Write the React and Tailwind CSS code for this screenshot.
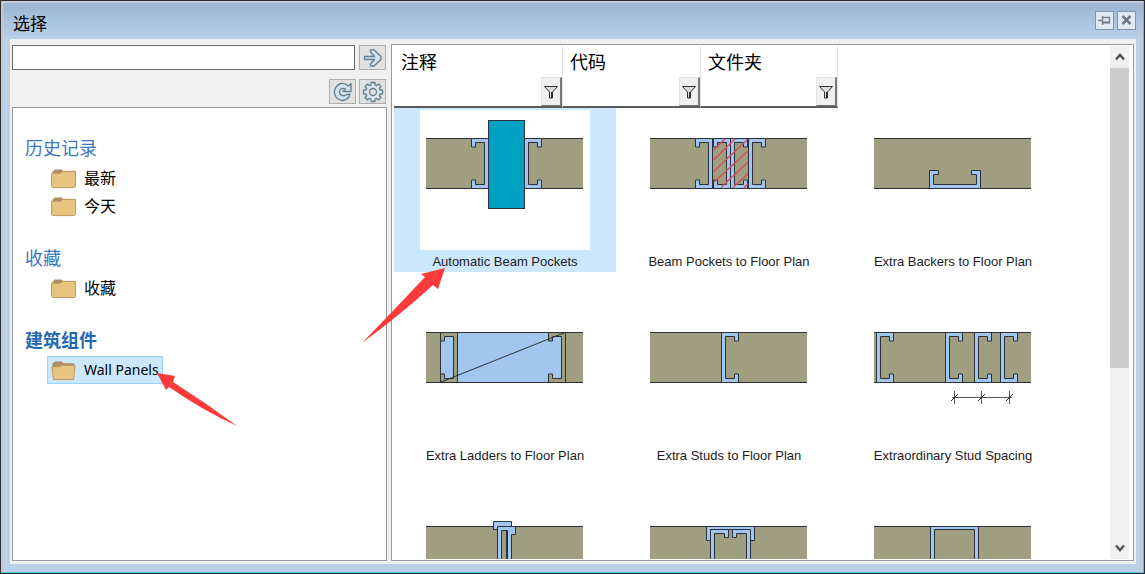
import React from 'react';

const groups = [
  { id: 'history', title: '历史记录', color: 'text-[#3a78bd]', items: ['最新', '今天'] },
  { id: 'favorites', title: '收藏', color: 'text-[#3a78bd]', items: ['收藏'] },
  { id: 'components', title: '建筑组件', color: 'text-[#2468b4] font-bold', items: ['Wall Panels'] }
];

const columns = [
  { name: '注释', width: 'w-[169px]' },
  { name: '代码', width: 'w-[138px]' },
  { name: '文件夹', width: 'w-[137px]' }
];

const STEEL = '#a3c6ee';
const WALL = '#a09e80';
const LINE = '#2c3038';

function Wall() {
  return (
    <>
      <rect x="6" y="28" width="157" height="50" fill={WALL} />
      <path d="M6 28.5H163M6 78.5H163" stroke={LINE} />
    </>
  );
}

// C profile, open to the right unless flipped
function Stud({ x, flip, fill = STEEL }) {
  return (
    <path
      transform={flip ? `translate(${x + 17} 28) scale(-1 1)` : `translate(${x} 28)`}
      d="M0 .5H17V9H13V4.5H4V46.5H13V42H17V50.5H0Z"
      fill={fill}
      stroke={LINE}
    />
  );
}

const drawings = {
  beam: (
    <>
      <Wall />
      <Stud x={51.5} flip />
      <Stud x={104.5} />
      <rect x="68.5" y="10.5" width="36" height="88" fill="#00a0c2" stroke={LINE} />
    </>
  ),
  pockets: (
    <>
      <Wall />
      <Stud x={51.5} flip />
      <Stud x={69.5} flip />
      <Stud x={86.5} />
      <Stud x={104.5} />
      <path d="M69.5 40L81 29M69.5 50L91 29M69.5 61.5L103 30M69.5 72.5L104 41M77 77.5L104 52M89 77.5L104 63.5M100 77.5L104 74" stroke="#d94a5a" strokeWidth="1.3" fill="none" />
    </>
  ),
  backers: (
    <>
      <Wall />
      <path d="M61.5 60.5H70.5V64.5H65.5V74.5H108.5V64.5H103.5V60.5H112.5V78.5H61.5Z" fill={STEEL} stroke={LINE} />
    </>
  ),
  ladders: (
    <>
      <Wall />
      <rect x="20.5" y="28.5" width="125" height="50" fill={STEEL} stroke={LINE} />
      <Stud x={20.5} flip fill={WALL} />
      <Stud x={128.5} flip fill={WALL} />
      <path d="M21 78L145 28.5" stroke={LINE} fill="none" />
    </>
  ),
  studs: (
    <>
      <Wall />
      <Stud x={77.5} />
    </>
  ),
  spacing: (
    <>
      <Wall />
      <Stud x={8.5} />
      <Stud x={77.5} />
      <Stud x={106.5} />
      <Stud x={132.5} />
      <path d="M84 93.5H144M86.5 87V100M113.5 87V100M141.5 87V100" stroke="#555" fill="none" />
      <path d="M83 97L90 90M110 97L117 90M138 97L145 90" stroke={LINE} fill="none" />
    </>
  ),
  corner: (
    <>
      <Wall />
      <path d="M73.5 23.5H91.5V28.5H78.5V31.5H73.5Z" fill={STEEL} stroke={LINE} />
      <path d="M77.5 28.5H95.5V36.5H91.5V78.5H87.5V32.5H81.5V78.5H77.5Z" fill={STEEL} stroke={LINE} />
      <path d="M86.5 32.5V78" stroke={LINE} />
    </>
  ),
  pocket: (
    <>
      <Wall />
      <path d="M62.5 28.5H110.5V42.5H106.5V31.5H66.5V42.5H62.5Z" fill={STEEL} stroke={LINE} />
      <path d="M66.5 31.5H84.5V39.5H80.5V35.5H70.5V78.5H66.5Z" fill={STEEL} stroke={LINE} />
      <path d="M106.5 31.5H88.5V39.5H92.5V35.5H102.5V78.5H106.5Z" fill={STEEL} stroke={LINE} />
    </>
  ),
  track: (
    <>
      <Wall />
      <path d="M62.5 28.5H110.5V78.5H106.5V31.5H66.5V78.5H62.5Z" fill={STEEL} stroke={LINE} />
    </>
  )
};

const parts = [
  { name: 'Automatic Beam Pockets', art: 'beam', selected: true },
  { name: 'Beam Pockets to Floor Plan', art: 'pockets' },
  { name: 'Extra Backers to Floor Plan', art: 'backers' },
  { name: 'Extra Ladders to Floor Plan', art: 'ladders' },
  { name: 'Extra Studs to Floor Plan', art: 'studs' },
  { name: 'Extraordinary Stud Spacing', art: 'spacing' },
  { art: 'corner' },
  { art: 'pocket' },
  { art: 'track' }
];

function FolderIcon({ open }) {
  return (
    <svg width="25" height="21" viewBox="0 0 26 22" fill="none">
      <path d="M2 3.5L4 1.5H11L13 3.5H24V8H1.5V3.5Z" fill="#ae8d62" />
      {open ? (
        <path d="M1 7H9L11 5.5H25V8L23.5 20.5H2.5Z" fill="#e8c480" stroke="#b8935f" />
      ) : (
        <path d="M.5 5.5H10L12 3.5H25.5V19.5L24.5 20.5H1.5L.5 19.5Z" fill="#e8c480" stroke="#b8935f" />
      )}
    </svg>
  );
}

function ToolButton({ label, children }) {
  return (
    <button aria-label={label} className="flex h-[25px] w-[27px] shrink-0 items-center justify-center border border-[#adadad] bg-[#e1e1e1]">
      {children}
    </button>
  );
}

function CaptionButton({ label, children }) {
  return (
    <button aria-label={label} className="flex h-[19px] w-[19px] items-center justify-center border border-[#8494a6] bg-[#dfeaf5]">
      {children}
    </button>
  );
}

function TitleBar() {
  return (
    <header className="flex h-9 shrink-0 items-center justify-between bg-linear-to-b from-[#9ab4d1] to-[#b9d1ea] pr-[7px] pl-2.5">
      <h1 className="pt-1.5 text-[17px] leading-6 text-black">选择</h1>
      <div className="flex gap-[3px] pb-0.5">
        <CaptionButton label="固定">
          <svg width="13" height="11" viewBox="0 0 13 11" fill="none" stroke="#76818d" strokeWidth="1.4">
            <path d="M0 5.5H4M4.5 1V10M4.5 2.5H11.5V7.5H4.5" />
            <path d="M5 7.5H12" strokeWidth="2" />
          </svg>
        </CaptionButton>
        <CaptionButton label="关闭">
          <svg width="11" height="10" viewBox="0 0 11 10" stroke="#6d7884" strokeWidth="2.5">
            <path d="M1.5 1L9.5 9M9.5 1L1.5 9" />
          </svg>
        </CaptionButton>
      </div>
    </header>
  );
}

function Sidebar() {
  return (
    <aside className="flex w-[375px] shrink-0 flex-col">
      <div className="flex gap-1 pt-px pr-px">
        <input type="text" aria-label="搜索" className="h-[25px] min-w-0 flex-1 border border-[#6a6a6a] bg-white px-1 text-sm outline-none" />
        <ToolButton label="转到">
          <svg width="20" height="20" viewBox="0 0 20 20" fill="#d3e2ee" stroke="#63818f" strokeWidth="1.4" strokeLinejoin="round">
            <path d="M1.5 8.500H11.500L7.500 4V2H11L18 8.500V11.500L11 18H7.500V16L11.500 11.500H1.500Z" />
          </svg>
        </ToolButton>
      </div>
      <div className="flex justify-end gap-[3px] pt-[9px] pr-px pb-[3px]">
        <ToolButton label="刷新">
          <svg width="20" height="20" viewBox="0 0 20 20" fill="#d3e2ee" stroke="#63818f" strokeWidth="1.3" strokeLinejoin="round">
            <path d="M18 1.5V9.5H10L12.5 7Q10 5.5 7.5 7.5Q5.5 10 7.5 12.5Q10 15 14 12.5H17L16 15Q13 18.5 9 18.5Q5 18 3 15Q.5 11 2 7Q4 2.5 8 1.5Q12 1 15.5 4Z" />
          </svg>
        </ToolButton>
        <ToolButton label="设置">
          <svg width="22" height="22" viewBox="0 0 22 22" fill="#d9e6f0" stroke="#63818f" strokeWidth="1.3" strokeLinejoin="round">
            <path d="M9 1.5H13V4L14.5 4.7L16.5 3L19 5.5L17.3 7.5L18 9H20.5V13H18L17.3 14.5L19 16.5L16.5 19L14.5 17.3L13 18V20.5H9V18L7.5 17.3L5.5 19L3 16.5L4.7 14.5L4 13H1.5V9H4L4.7 7.5L3 5.5L5.5 3L7.5 4.7L9 4Z" />
            <circle cx="11" cy="11" r="3.5" fill="#e1e1e1" />
          </svg>
        </ToolButton>
      </div>
      <nav className="flex min-h-0 flex-1 flex-col gap-[22px] overflow-hidden border border-[#979ba3] bg-white px-3 pt-6">
        {groups.map((group) => (
          <section key={group.id}>
            <h2 className={`text-[18px] leading-8 ${group.color}`}>{group.title}</h2>
            {group.items.map((item) => {
              const active = item === 'Wall Panels';
              return (
                <button
                  key={item}
                  className={`ml-[22px] flex h-7 items-center gap-2 border px-[3px] text-black ${active ? 'border-[#99d1ff] bg-[#cce8ff] text-sm' : 'border-transparent text-[16px]'}`}
                >
                  <FolderIcon open={active} />
                  {item}
                </button>
              );
            })}
          </section>
        ))}
      </nav>
    </aside>
  );
}

function ColumnHeaders() {
  return (
    <div className="flex shrink-0">
      {columns.map((column) => (
        <div key={column.name} className={`flex h-[62px] flex-col justify-between border-r border-b-2 border-r-[#e4e4e4] border-b-[#5a5a5a] ${column.width}`}>
          <span className="px-[7px] pt-0.5 text-[18px] leading-7 text-black">{column.name}</span>
          <button aria-label={`筛选${column.name}`} className="flex h-[29px] w-[21px] items-center justify-center self-end border-t border-r-2 border-b border-l border-t-[#e3e3e3] border-r-[#777] border-b-[#777] border-l-[#e3e3e3] bg-[#f0f0f0]">
            <svg width="14" height="14" viewBox="0 0 14 14" fill="#dcdcdc" stroke="#333">
              <path d="M.5 1.5H13.5L8.5 7V13H5.5V7Z" />
              <path d="M7.5 7V13" />
            </svg>
          </button>
        </div>
      ))}
    </div>
  );
}

function PartCard({ part }) {
  return (
    <button className={`flex h-[164px] w-[222px] flex-col items-center pt-0.5 ${part.selected ? 'bg-[#cce8ff]' : 'bg-white'}`}>
      <svg width="170" height="140" viewBox="0 0 170 140" className="shrink-0 bg-white">
        {drawings[part.art]}
      </svg>
      <span className="font-['Liberation_Sans'] text-[13px] leading-6 whitespace-nowrap text-[#1c1c1c]">{part.name}</span>
    </button>
  );
}

function ScrollBar() {
  return (
    <div className="mr-[3px] flex w-[19px] shrink-0 flex-col bg-[#f0f0f0]">
      <button aria-label="向上滚动" className="flex h-[22px] items-center justify-center">
        <svg width="10" height="8" viewBox="0 0 10 8" fill="none" stroke="#555" strokeWidth="2.5">
          <path d="M1 6.5L5 2L9 6.5" />
        </svg>
      </button>
      <div className="min-h-0 flex-1">
        <div className="h-[64%] bg-[#cdcdcd]" />
      </div>
      <button aria-label="向下滚动" className="flex h-[22px] items-center justify-center">
        <svg width="10" height="8" viewBox="0 0 10 8" fill="none" stroke="#555" strokeWidth="2.5">
          <path d="M1 1.5L5 6L9 1.5" />
        </svg>
      </button>
    </div>
  );
}

export default function App() {
  return (
    <div className="relative flex h-screen flex-col overflow-hidden border border-[#302d30] bg-[#b9d0e9] font-['Noto_Sans','Noto_Sans_CJK_SC',sans-serif]">
      <div className="flex min-h-0 flex-1 flex-col border-t-2 border-r border-b border-l-2 border-t-[#c3cad4] border-r-[#52c4d8] border-b-[#52c4d8] border-l-[#c3cad4]">
        <TitleBar />
        <div className="mx-[7px] mb-2 flex min-h-0 flex-1 gap-1 bg-[#f0f0f0] pt-[5px] pr-0.5 pb-[3px] pl-0.5">
          <Sidebar />
          <main className="flex min-w-0 flex-1 border border-[#979ba3] bg-white py-px pr-px pl-0.5">
            <div className="flex min-w-0 flex-1 flex-col">
              <ColumnHeaders />
              <div className="flex min-h-0 flex-1 flex-wrap content-start gap-x-0.5 gap-y-[30px] overflow-hidden">
                {parts.map((part) => (
                  <PartCard key={part.art} part={part} />
                ))}
              </div>
            </div>
            <ScrollBar />
          </main>
        </div>
      </div>

      {/* Red pointer arrows */}
      <svg width="84" height="78" viewBox="0 0 84 78" className="pointer-events-none absolute top-[266px] left-[360px]" fill="#fd3a3a">
        <path d="M84 1L77 22L72 18Q38 49 1 76Q33 43 64 10L60 7Z" />
      </svg>
      <svg width="82" height="56" viewBox="0 0 82 56" className="pointer-events-none absolute top-[371px] left-[155px]" fill="#fd3a3a">
        <path d="M1 1L19 4L17 10Q50 31 81 54Q46 38 13 15L10 18Z" />
      </svg>
    </div>
  );
}
